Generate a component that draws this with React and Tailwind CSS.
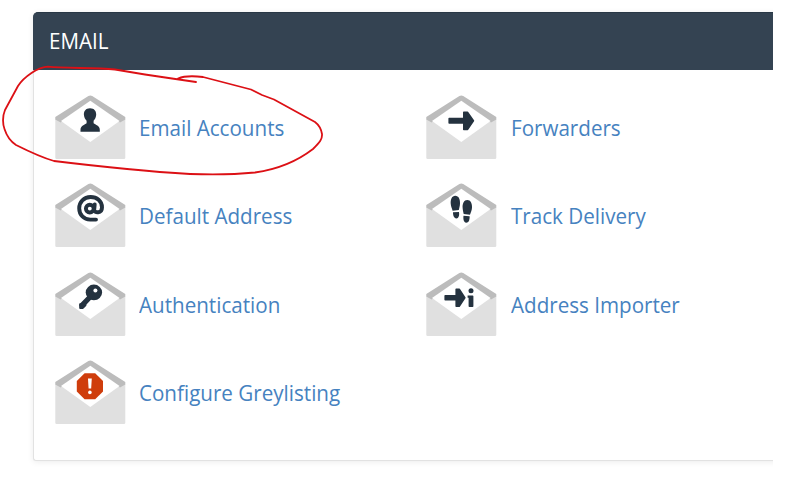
const INK = '#24323f';

const glyphs = {
  person: (
    <path
      fill={INK}
      d="M35 13.2C39.2 13.2 41.4 16 41.2 19.8C41 22.4 40 24.4 38.6 25.8V28.2C40.4 29.8 44.8 30.4 44.8 34.8V36.8H25.5V34.8C25.5 30.4 29.8 29.8 31.6 28.2V25.8C30.2 24.4 29.1 22.4 28.9 19.8C28.7 16 30.8 13.2 35 13.2Z"
    />
  ),
  at: (
    <g fill="none" stroke={INK} strokeLinecap="round">
      <circle cx="34.8" cy="25.6" r="3.9" strokeWidth="3.9" />
      <path
        strokeWidth="3.9"
        d="M39.7 21.4L39.2 26.8C39.2 30.2 47 30.6 47 24.4C47 18 41.8 14 35.6 14C28.8 14 24.2 19 24.2 25.3C24.2 32.1 29 36.4 35.2 36.6H41"
      />
    </g>
  ),
  key: (
    <>
      <path stroke={INK} strokeWidth="5.2" strokeLinecap="round" d="M36 24L27 33.4" />
      <path fill={INK} d="M24.2 31.6L31 30.6L31.4 33.8L28 37H25.2Q24.2 37 24.2 36Z" />
      <ellipse cx="38.9" cy="20.4" rx="8.2" ry="7.8" fill={INK} />
      <circle cx="40.4" cy="18.6" r="2" fill="#fff" />
    </>
  ),
  stop: (
    <>
      <path fill="#cf3d0c" d="M29.6 13.2H40.2L48 21V31.4L40.2 39.2H29.6L21.8 31.4V21Z" />
      <path fill="#fff" d="M33 18.6H36.8L36.2 28.6H33.6Z" />
      <circle cx="34.9" cy="32.4" r="1.8" fill="#fff" />
    </>
  ),
  arrow: (
    <path
      fill={INK}
      stroke={INK}
      strokeWidth="1.6"
      strokeLinejoin="round"
      d="M23.2 23.6H37.8V17.4H41.6L47.4 25.8L41.6 34.4H37.8V27.9H23.2Z"
    />
  ),
  steps: (
    <g fill={INK}>
      <path d="M29.2 12.8C32.7 12.8 34.2 16.4 34 20.4C33.9 23.1 33.2 25.1 32.8 27.1L26.6 27.7C25.8 25.3 24.9 23.3 24.7 20.6C24.5 16.4 26 12.8 29.2 12.8Z" />
      <path d="M27 29.3L33 28.9C33.5 32.6 32.6 35.3 30.4 35.4C28 35.5 27 32.7 27 29.3Z" />
      <path d="M41.2 17C44.7 17 46.2 20.6 46 24.6C45.9 27.3 44.8 29.5 44 31.7L37.7 31.1C37.3 29.1 36.7 27.1 36.6 24.6C36.4 20.6 38 17 41.2 17Z" />
      <path d="M37.5 32.8L43.6 33.3C43.8 37.2 42.5 39.8 40.1 39.7C37.8 39.6 37 36.4 37.5 32.8Z" />
    </g>
  ),
  importer: (
    <g fill={INK}>
      <path
        stroke={INK}
        strokeWidth="1.6"
        strokeLinejoin="round"
        d="M19.2 23.7H30.2V17.2H33.2L38.8 25.7L33.2 34.2H30.2V27.7H19.2Z"
      />
      <circle cx="45" cy="18.8" r="2.5" />
      <path d="M41.6 23.4H46.6Q47.4 23.4 47.4 24.2V34.2Q47.4 35 46.6 35H43.4Q42.6 35 42.6 34.2V25.8H41.6Z" />
    </g>
  ),
};

function Envelope({ icon }) {
  return (
    <svg className="block h-[65px] w-[71px] shrink-0" viewBox="0 0 71 65" aria-hidden="true">
      <path fill="#e0e0e0" d="M0.3 24L35.3 2L70.3 24V62.8Q70.3 64 69 64H1.6Q0.3 64 0.3 62.8Z" />
      <path fill="#bcbcbc" d="M0.3 22L33.4 1Q35.3 -0.2 37.2 1L70.3 22V24.6L65 27.5L35.3 8L5.6 27.5L0.3 24.6Z" />
      <path fill="#fff" d="M35.3 5.8L64.6 26L35.3 47L6 26Z" />
      {glyphs[icon]}
    </svg>
  );
}

const items = [
  ['person', 'Email Accounts'],
  ['arrow', 'Forwarders'],
  ['at', 'Default Address'],
  ['steps', 'Track Delivery'],
  ['key', 'Authentication'],
  ['importer', 'Address Importer'],
  ['stop', 'Configure Greylisting'],
];

export default function App() {
  return (
    <div className="relative h-[478px] w-[812px] overflow-hidden bg-white font-['Open_Sans',sans-serif]">
      <div className="h-[478px] w-[773px] overflow-hidden pt-3 pl-[33px]">
        <section className="h-[449px] w-[760px] rounded-t-md rounded-b-[3px] border-b border-l border-[#e2e2e2] bg-white shadow-[0_1px_6px_rgba(0,0,0,0.08)]">
          <h2 className="-ml-px flex h-[58px] items-center rounded-tl-[5px] border-t border-[#293846] bg-[#344352] pl-4 text-[21.5px] text-white">
            <span className="origin-left scale-x-[0.957]">EMAIL</span>
          </h2>
          <ul className="grid auto-rows-[88.4px] grid-cols-[371.4px_1fr] pt-[25px] pl-[21px]">
            {items.map(([icon, label]) => (
              <li key={label} className="flex items-start">
                <Envelope icon={icon} />
                <a className="ml-[13.4px] origin-left scale-x-[0.954] text-[21.6px] leading-[66px] whitespace-nowrap text-[#4682c0]">
                  {label}
                </a>
              </li>
            ))}
          </ul>
        </section>
      </div>
      <svg className="pointer-events-none absolute top-0 left-0 h-[478px] w-[812px]" viewBox="0 0 812 478" aria-hidden="true">
        <path
          fill="none"
          stroke="#dc1015"
          strokeWidth="1.8"
          strokeLinecap="round"
          strokeLinejoin="round"
          d="M196 82L172 78.5L145 74.5L115 69.5C95 67.5 65 68.5 48 66.7C38 67 24 77 18 86L5 110C2.5 116 2.5 124 4.5 129C7 137 10 141 16 145C28 151 40 157 54 161C95 166 140 171 190 174C215 175 235 174.5 255 172.5C280 169 300 159 313 149C320 142 322.5 139 322 134C321 128 319 125 315 122L274 99.5L262 95L251 89.5L203 77C195 76 184 76 178 78.5"
        />
      </svg>
    </div>
  );
}
